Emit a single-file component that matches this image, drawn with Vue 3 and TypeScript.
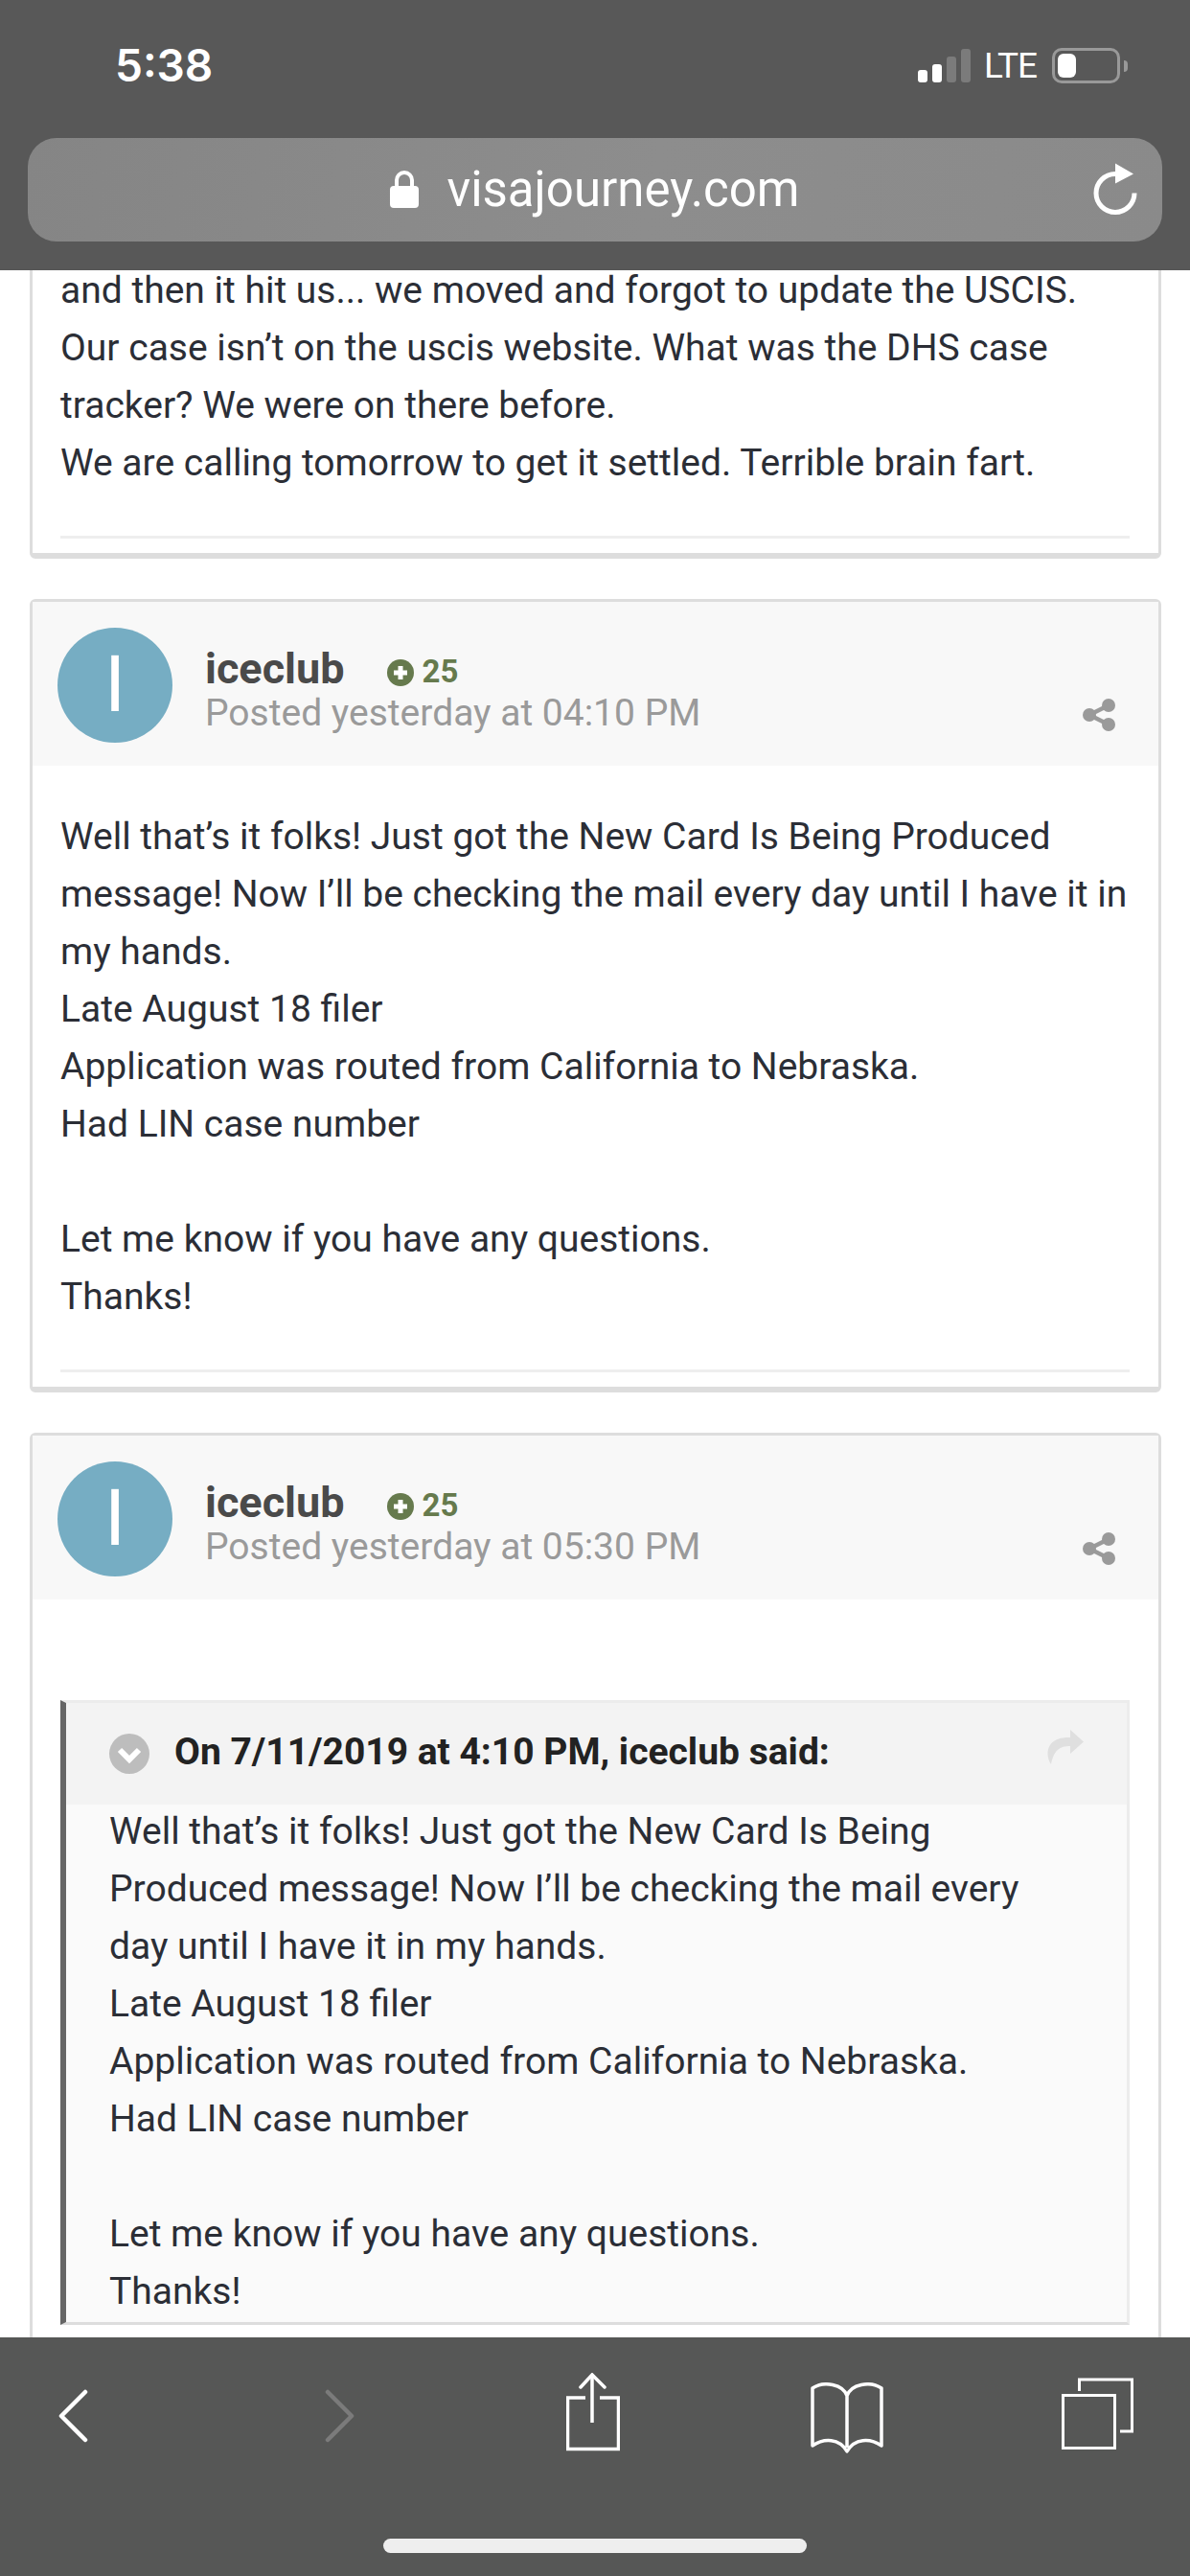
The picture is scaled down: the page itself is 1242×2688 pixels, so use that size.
<script setup lang="ts">
interface Post {
  time: string
  lines: string[]
}

const firstLines: string[] = [
  'and then it hit us... we moved and forgot to update the USCIS.',
  'Our case isn\u2019t on the uscis website. What was the DHS case',
  'tracker? We were on there before.',
  'We are calling tomorrow to get it settled. Terrible brain fart.',
]

const post: Post = {
  time: 'Posted yesterday at 04:10 PM',
  lines: [
    'Well that\u2019s it folks! Just got the New Card Is Being Produced',
    'message! Now I\u2019ll be checking the mail every day until I have it in',
    'my hands.',
    'Late August 18 filer',
    'Application was routed from California to Nebraska.',
    'Had LIN case number',
    '',
    'Let me know if you have any questions.',
    'Thanks!',
  ],
}

const quoteLines: string[] = [
  'Well that\u2019s it folks! Just got the New Card Is Being',
  'Produced message! Now I\u2019ll be checking the mail every',
  'day until I have it in my hands.',
  'Late August 18 filer',
  'Application was routed from California to Nebraska.',
  'Had LIN case number',
  '',
  'Let me know if you have any questions.',
  'Thanks!',
]
</script>

<template>
  <div class="phone">
    <header class="top-bar">
      <div class="status">
        <span class="time">5:38</span>
        <div class="status-right">
          <div class="signal">
            <i class="bar b1"></i><i class="bar b2"></i><i class="bar b3 off"></i><i class="bar b4 off"></i>
          </div>
          <span class="lte">LTE</span>
          <div class="battery"><i class="charge"></i></div>
          <i class="nub"></i>
        </div>
      </div>
      <div class="url-bar">
        <svg class="lock" width="30" height="40" viewBox="0 0 30 40">
          <path d="M7 20V11a8 8 0 0 1 16 0v9" fill="none" stroke="#fff" stroke-width="4" />
          <rect x="0" y="17" width="30" height="23" rx="4" fill="#fff" />
        </svg>
        <span class="url">visajourney.com</span>
        <svg class="reload" width="48" height="56" viewBox="0 0 48 56">
          <path d="M24 13.500A20 20 0 1 0 44 33.500" fill="none" stroke="#fff" stroke-width="5" />
          <path d="M24 2.500L43 13.500L24 23.500Z" fill="#fff" />
        </svg>
      </div>
    </header>

    <main class="content">
      <div class="feed">
        <article class="card">
          <div class="body first-body">
            <p v-for="(line, i) in firstLines" :key="i" class="line">{{ line }}</p>
          </div>
          <div class="divider"></div>
        </article>

        <article class="card">
          <div class="post-head">
            <div class="avatar">I</div>
            <div class="meta">
              <div class="name-row">
                <span class="name">iceclub</span>
                <svg class="rep-icon" width="28" height="28" viewBox="0 0 28 28">
                  <circle cx="14" cy="14" r="14" fill="#667a4d" />
                  <path d="M14 7v14M7 14h14" stroke="#fff" stroke-width="5" />
                </svg>
                <span class="rep">25</span>
              </div>
              <div class="date">{{ post.time }}</div>
            </div>
            <svg class="share" width="34" height="34" viewBox="0 0 34 34">
              <path d="M27 7L7 17L27 27" fill="none" stroke="#9a9a9a" stroke-width="4.500" />
              <circle cx="27" cy="7" r="7" fill="#9a9a9a" />
              <circle cx="7" cy="17" r="7" fill="#9a9a9a" />
              <circle cx="27" cy="27" r="7" fill="#9a9a9a" />
            </svg>
          </div>
          <div class="body">
            <p v-for="(line, i) in post.lines" :key="i" class="line">{{ line || '\u00a0' }}</p>
          </div>
          <div class="divider"></div>
        </article>

        <article class="card">
          <div class="post-head">
            <div class="avatar">I</div>
            <div class="meta">
              <div class="name-row">
                <span class="name">iceclub</span>
                <svg class="rep-icon" width="28" height="28" viewBox="0 0 28 28">
                  <circle cx="14" cy="14" r="14" fill="#667a4d" />
                  <path d="M14 7v14M7 14h14" stroke="#fff" stroke-width="5" />
                </svg>
                <span class="rep">25</span>
              </div>
              <div class="date">Posted yesterday at 05:30 PM</div>
            </div>
            <svg class="share" width="34" height="34" viewBox="0 0 34 34">
              <path d="M27 7L7 17L27 27" fill="none" stroke="#9a9a9a" stroke-width="4.500" />
              <circle cx="27" cy="7" r="7" fill="#9a9a9a" />
              <circle cx="7" cy="17" r="7" fill="#9a9a9a" />
              <circle cx="27" cy="27" r="7" fill="#9a9a9a" />
            </svg>
          </div>
          <blockquote class="quote">
            <div class="quote-head">
              <svg width="42" height="42" viewBox="0 0 42 42">
                <circle cx="21" cy="21" r="21" fill="#bdbdbd" />
                <path d="M11 17L21 27L31 17" fill="none" stroke="#fff" stroke-width="6" />
              </svg>
              <span class="quote-title">On 7/11/2019 at 4:10 PM, iceclub said:</span>
              <svg class="quote-link" width="40" height="36" viewBox="0 0 40 36">
                <path d="M26 0L40 12.500L26 25V17C15 17 9 21 6 36C0 28 -1 7 26 8Z" fill="#dfdfdf" />
              </svg>
            </div>
            <div class="quote-body">
              <p v-for="(line, i) in quoteLines" :key="i" class="line">{{ line || '\u00a0' }}</p>
            </div>
          </blockquote>
        </article>
      </div>
    </main>

    <footer class="bottom-bar">
      <div class="tools">
        <svg class="t-back" width="32" height="56" viewBox="0 0 32 56">
          <path d="M28 3L3 28L28 53" fill="none" stroke="#fff" stroke-width="4.500" stroke-linecap="round" stroke-linejoin="round" />
        </svg>
        <svg class="t-forward" width="32" height="56" viewBox="0 0 32 56">
          <path d="M4 3L29 28L4 53" fill="none" stroke="#7b7b7b" stroke-width="4.500" stroke-linecap="round" stroke-linejoin="round" />
        </svg>
        <svg class="t-share" width="56" height="82" viewBox="0 0 56 82">
          <path d="M20 26H1.500V79.500H54.500V26H35" fill="none" stroke="#fff" stroke-width="3.500" />
          <path d="M27 2V52" stroke="#fff" stroke-width="3.500" fill="none" />
          <path d="M15 15L27 2L40 15" stroke="#fff" stroke-width="3.500" stroke-linecap="round" fill="none" />
        </svg>
        <svg class="t-book" width="76" height="74" viewBox="0 0 76 74">
          <path d="M38 14C34 2 14 -2 2 6V66C14 58 30 58 38 72C46 58 62 58 74 66V6C62 -2 42 2 38 14V68" fill="none" stroke="#fff" stroke-width="3.500" stroke-linejoin="round" />
        </svg>
        <svg class="t-tabs" width="76" height="76" viewBox="0 0 76 76">
          <rect x="1.500" y="18.500" width="54" height="55" fill="none" stroke="#fff" stroke-width="3" />
          <path d="M18.500 14V2H73.500V56H61" fill="none" stroke="#fff" stroke-width="3" />
        </svg>
      </div>
      <div class="home-indicator"></div>
    </footer>
  </div>
</template>

<style scoped>
.phone {
  width: 1242px;
  height: 2688px;
  display: flex;
  flex-direction: column;
  overflow: hidden;
  background: #fff;
  font-family: Roboto, "Liberation Sans", sans-serif;
  color: #2b2e36;
}

/* top chrome */
.top-bar {
  height: 282px;
  flex: none;
  background: #585858;
  box-sizing: border-box;
}
.status {
  height: 144px;
  box-sizing: border-box;
  padding: 43px 65px 0 120px;
  display: flex;
  justify-content: space-between;
  align-items: flex-start;
}
.time {
  color: #fff;
  font-family: Inter, Roboto, sans-serif;
  font-size: 46px;
  font-weight: 600;
  line-height: 50px;
}
.status-right {
  display: flex;
  align-items: center;
  height: 43px;
  margin-top: 4px;
}
.signal {
  display: flex;
  align-items: flex-end;
  gap: 5px;
  height: 35px;
  margin-right: 14px;
}
.bar {
  display: block;
  width: 10px;
  background: #fff;
  border-radius: 3px;
}
.bar.off { background: #7b7b7b; }
.b1 { height: 13px; }
.b2 { height: 19px; }
.b3 { height: 27px; }
.b4 { height: 35px; }
.lte {
  color: #fff;
  font-size: 37px;
  letter-spacing: -1px;
  line-height: 40px;
  margin-right: 16px;
}
.battery {
  width: 71px;
  height: 37px;
  box-sizing: border-box;
  border: 3px solid #999;
  border-radius: 10px;
  padding: 3px;
}
.charge {
  display: block;
  width: 19px;
  height: 25px;
  background: #fff;
  border-radius: 6px;
}
.nub {
  display: block;
  width: 4px;
  height: 12px;
  margin-left: 4px;
  background: #999;
  border-radius: 0 6px 6px 0;
}
.url-bar {
  position: relative;
  height: 108px;
  margin: 0 29px;
  border-radius: 30px;
  background: linear-gradient(100deg, #858585, #8d8d8d 55%, #8a8a8a);
  display: flex;
  align-items: center;
  justify-content: center;
  gap: 29px;
}
.lock { margin-top: -2px; }
.url {
  color: #fff;
  font-size: 51px;
  line-height: 60px;
  margin-top: -1px;
}
.reload {
  position: absolute;
  right: 25px;
  top: 24px;
}

/* scrolling page */
.content {
  flex: 1;
  min-height: 0;
  overflow: hidden;
}
.feed {
  margin-top: -47px;
  padding: 0 30px 0 31px;
  display: flex;
  flex-direction: column;
  gap: 42px;
}
.card {
  border: 3px solid #ddd;
  border-bottom-width: 6px;
  border-radius: 6px;
  padding-bottom: 15px;
  background: #fff;
  flex: none;
}
.post-head {
  height: 171px;
  box-sizing: border-box;
  padding: 27px 45px 0 26px;
  background: #f8f8f8;
  display: flex;
  align-items: flex-start;
}
.avatar {
  width: 120px;
  height: 120px;
  flex: none;
  border-radius: 50%;
  background: #76adc3;
  color: #fff;
  font-size: 81px;
  line-height: 120px;
  text-align: center;
}
.meta {
  margin: 20px 0 0 34px;
}
.name-row {
  display: flex;
  align-items: center;
  height: 46px;
}
.name {
  color: #4a4a4a;
  font-size: 45px;
  font-weight: 700;
  line-height: 46px;
}
.rep-icon {
  margin: 8px 0 0 44px;
}
.rep {
  color: #667a4d;
  font-size: 33px;
  font-weight: 700;
  line-height: 46px;
  margin: 6px 0 0 9px;
}
.date {
  color: #9a9a9a;
  font-size: 39px;
  line-height: 46px;
  white-space: nowrap;
}
.share {
  margin: 74px 0 0 auto;
}
.body {
  padding: 44px 29px 0;
}
.first-body {
  padding-top: 35px;
}
.line {
  margin: 0;
  font-size: 39px;
  line-height: 60px;
  white-space: nowrap;
}
.divider {
  height: 3px;
  background: #eee;
  margin: 46px 30px 0 29px;
}

/* quote */
.quote {
  margin: 105px 30px 0 29px;
  border: 3px solid #ececec;
  border-left: 6px solid #666;
  border-bottom-color: #ddd;
  background: #fafafa;
}
.quote-head {
  height: 106px;
  box-sizing: border-box;
  padding: 0 45px 0 45px;
  background: #f3f3f3;
  display: flex;
  align-items: center;
  color: #222;
}
.quote-title {
  margin: -5px 0 0 26px;
  font-size: 39px;
  font-weight: 700;
  white-space: nowrap;
}
.quote-link {
  margin: -14px 0 0 auto;
}
.quote-body {
  margin-top: -2px;
  padding: 0 30px 2px 45px;
}

/* bottom chrome */
.bottom-bar {
  height: 249px;
  flex: none;
  background: #565756;
  display: flex;
  flex-direction: column;
}
.tools {
  display: flex;
  align-items: flex-start;
  height: 210px;
}
.t-back { margin: 54px 0 0 61px; }
.t-forward { margin: 54px 0 0 245px; }
.t-share { margin: 37px 0 0 221px; }
.t-book { margin: 47px 0 0 199px; }
.t-tabs { margin: 42px 0 0 186px; }
.home-indicator {
  width: 442px;
  height: 15px;
  margin-left: 400px;
  border-radius: 8px;
  background: #eee;
}
</style>

<style>
html, body {
  margin: 0;
  background: #fff;
}
</style>
